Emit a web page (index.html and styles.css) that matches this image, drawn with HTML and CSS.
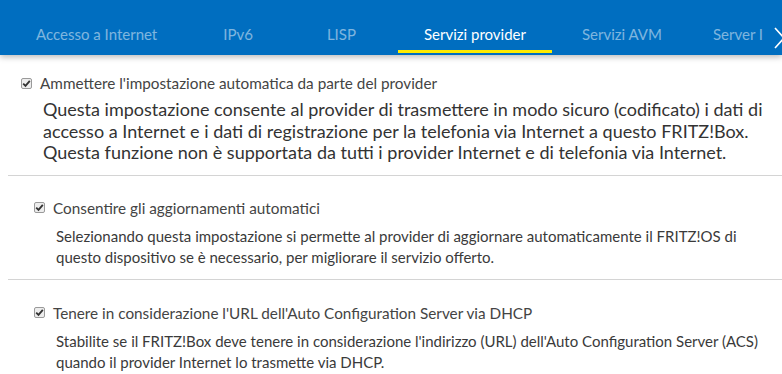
FILE: index.html
```html
<!DOCTYPE html>
<html lang="it">
<head>
<meta charset="utf-8">
<title>Servizi provider</title>
<link rel="stylesheet" href="styles.css">
</head>
<body>
<header class="tabbar">
  <nav class="tabs">
    <a class="tab">Accesso a Internet</a>
    <a class="tab">IPv6</a>
    <a class="tab">LISP</a>
    <a class="tab active">Servizi provider</a>
    <a class="tab">Servizi AVM</a>
    <a class="tab">Server I</a>
  </nav>
  <span class="next">
    <svg width="12" height="22" viewBox="0 0 12 22"><path d="M1 1 L10 11 L1 21" fill="none" stroke="#fff" stroke-width="1.6"/></svg>
  </span>
</header>
<main class="content">
  <section class="block first">
    <label class="check-row">
      <span class="cb"><svg width="9" height="9" viewBox="0 0 9 9"><path d="M1.2 4.6 L3.5 6.9 L7.8 1.8" fill="none" stroke="#333" stroke-width="1.8"/></svg></span>
      <span class="label">Ammettere l'impostazione automatica da parte del provider</span>
    </label>
    <p class="desc big">Questa impostazione consente al provider di trasmettere in modo sicuro (codificato) i dati di accesso a Internet e i dati di registrazione per la telefonia via Internet a questo FRITZ!Box. Questa funzione non è supportata da tutti i provider Internet e di telefonia via Internet.</p>
  </section>
  <section class="block sub second">
    <label class="check-row">
      <span class="cb"><svg width="9" height="9" viewBox="0 0 9 9"><path d="M1.2 4.6 L3.5 6.9 L7.8 1.8" fill="none" stroke="#333" stroke-width="1.8"/></svg></span>
      <span class="label">Consentire gli aggiornamenti automatici</span>
    </label>
    <p class="desc">Selezionando questa impostazione si permette al provider di aggiornare automaticamente il FRITZ!OS di questo dispositivo se è necessario, per migliorare il servizio offerto.</p>
  </section>
  <section class="block sub last">
    <label class="check-row">
      <span class="cb"><svg width="9" height="9" viewBox="0 0 9 9"><path d="M1.2 4.6 L3.5 6.9 L7.8 1.8" fill="none" stroke="#333" stroke-width="1.8"/></svg></span>
      <span class="label">Tenere in considerazione l'URL dell'Auto Configuration Server via DHCP</span>
    </label>
    <p class="desc">Stabilite se il FRITZ!Box deve tenere in considerazione l'indirizzo (URL) dell'Auto Configuration Server (ACS) quando il provider Internet lo trasmette via DHCP.</p>
  </section>
</main>
</body>
</html>
```

FILE: styles.css
```css
* { box-sizing: border-box; }
html, body { margin: 0; padding: 0; background: #fff; }
body {
  font-family: Lato, "Noto Sans", sans-serif;
  color: #333;
  overflow: hidden;
}
.tabbar {
  position: relative;
  height: 55px;
  background: #006ec0;
  box-shadow: 0 2px 6px rgba(0,0,0,0.28);
  padding: 0 0 2px 12px;
  display: flex;
  z-index: 1;
}
.tabs {
  display: flex;
  overflow: hidden;
  white-space: nowrap;
  width: 758px;
}
.tab {
  display: block;
  flex: none;
  padding: 24px 24px 6px;
  line-height: 20px;
  font-size: 15px;
  color: rgba(255,255,255,0.5);
  border-bottom: 3px solid transparent;
}
.tab:nth-child(2) { margin-left: 18px; }
.tab:nth-child(3) { margin-left: 26px; }
.tab:nth-child(4) { margin-left: 18px; }
.tab:nth-child(5) { margin-left: 6px; }
.tab:nth-child(6) { margin-left: 3px; }
.tab.active {
  color: #fff;
  padding-left: 26px;
  padding-right: 26px;
  border-bottom-color: #ffeb00;
}
.next {
  position: absolute;
  right: -6px;
  top: 27px;
  width: 14px;
  height: 22px;
}
.content {
  padding: 0 0 0 8px;
}
.block {
  border-bottom: 1px solid #d4d4d4;
}
.block.last { border-bottom: none; }
.block.first { padding: 18px 0 11px 13px; }
.block.sub { padding: 22px 0 11px 26px; }
.block.sub.last { padding-top: 23px; }
.check-row {
  display: flex;
  align-items: center;
  gap: 8px;
  line-height: 20px;
  font-size: 15.3px;
  color: #444;
}
.cb {
  width: 11px;
  height: 11px;
  border: 1px solid #9a9a9a;
  border-radius: 2px;
  background: #ededed;
  display: flex;
  align-items: center;
  justify-content: center;
}
.cb svg { display: block; }
.desc {
  margin: 0;
  padding-left: 22px;
  font-size: 15px;
  line-height: 21px;
  color: #3a3a3a;
  margin-top: 8px;
}
.desc.big {
  font-size: 18px;
  line-height: 21.5px;
  color: #333;
  margin-top: 6px;
  padding-right: 10px;
}
```
